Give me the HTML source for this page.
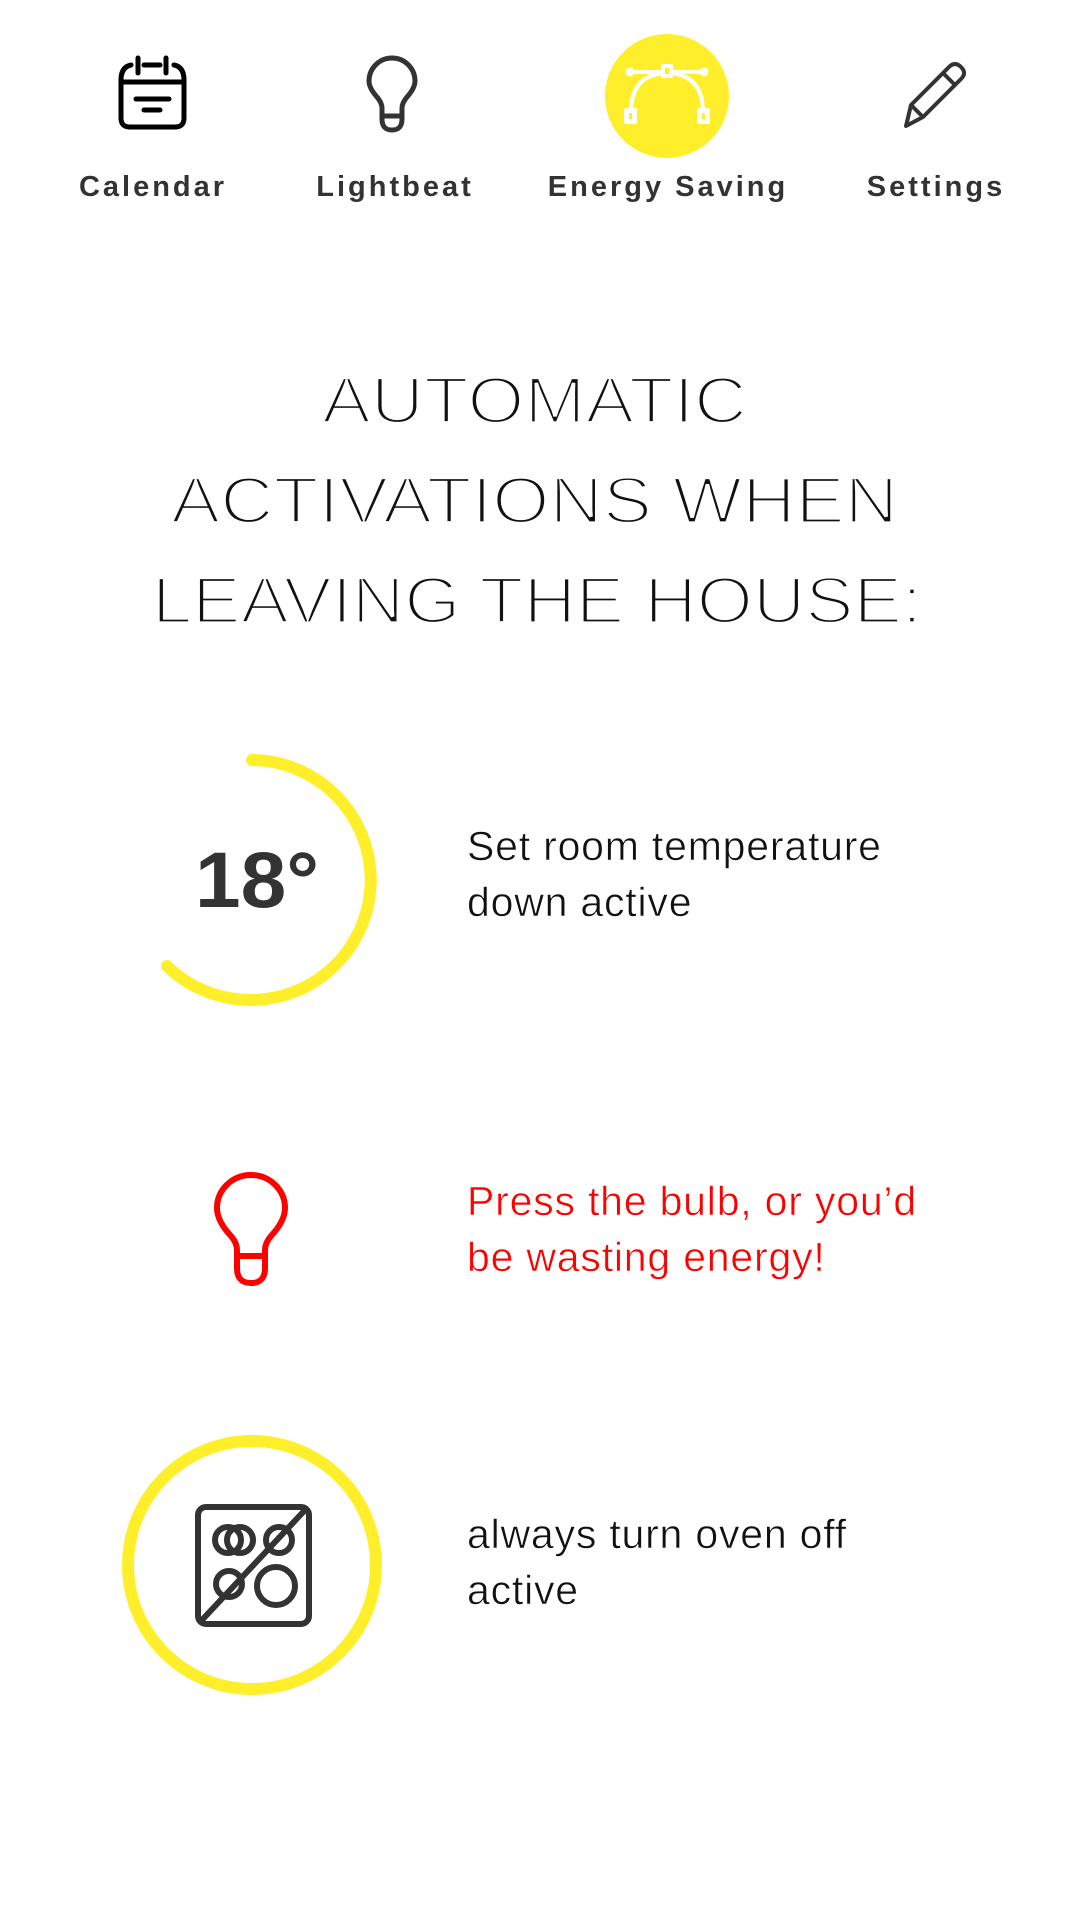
<!DOCTYPE html>
<html><head><meta charset="utf-8"><style>
html,body{margin:0;padding:0;background:#fff;width:1080px;height:1921px;overflow:hidden}
body{position:relative;font-family:"Liberation Sans",sans-serif}
.lbl{position:absolute;top:171px;font-size:29px;font-weight:bold;color:#333;letter-spacing:3px;white-space:nowrap;transform:translateX(-50%)}
.t{position:absolute;left:467px;font-size:41px;letter-spacing:0.8px;line-height:56px;color:#111;white-space:nowrap;-webkit-text-stroke:0.6px #fff}
svg{position:absolute;left:0;top:0}
</style></head><body>
<svg width="1080" height="1921" viewBox="0 0 1080 1921">
<!-- calendar -->
<g fill="none" stroke="#000" stroke-width="5" stroke-linecap="round">
<path d="M131 65 Q121 67 121 80 V118 Q121 127 130 127 H175 Q184 127 184 118 V80 Q184 67 174 65"/>
<line x1="121" y1="82" x2="184" y2="82"/>
<line x1="138" y1="58" x2="138" y2="73"/><line x1="166" y1="58" x2="166" y2="73"/>
<line x1="144" y1="65" x2="160" y2="65"/>
<line x1="136" y1="99" x2="169" y2="99"/><line x1="144" y1="110" x2="160" y2="110"/>
</g>
<!-- bulb -->
<g fill="none" stroke="#333" stroke-width="5" stroke-linejoin="round">
<path d="M382 119 V108 Q382 103 377 97 Q369 88 369 81 A23 23 0 0 1 415 81 Q415 88 407 97 Q402 103 402 108 V119 Q402 130 392 130 Q382 130 382 119 Z"/>
<line x1="382" y1="116" x2="402" y2="116"/>
</g>
<!-- energy saving -->
<circle cx="667" cy="96" r="62" fill="#ffef2a"/>
<g fill="none" stroke="#fff" stroke-width="4">
<path d="M631 112 Q631 74 667 73 Q703 74 703 112"/>
<line x1="631" y1="72" x2="703" y2="72"/>
</g>
<g fill="#fff">
<rect x="661" y="64" width="12" height="14" rx="2"/>
<circle cx="630" cy="72" r="4.5"/><circle cx="704" cy="72" r="4.5"/>
<rect x="624" y="108" width="13" height="16" rx="2"/><rect x="697" y="108" width="13" height="16" rx="2"/>
</g>
<g fill="#ffef2a"><rect x="665" y="68" width="4" height="6"/><rect x="629" y="113" width="3" height="6"/><rect x="702" y="113" width="3" height="6"/></g>
<!-- pencil -->
<g fill="none" stroke="#333" stroke-width="4" stroke-linejoin="round">
<path d="M906 126 L911 105 L949 67 Q955 61 961 67 Q967 73 961 79 L923 117 Z"/>
<line x1="911" y1="105" x2="923" y2="117"/><line x1="943" y1="73" x2="955" y2="85"/>
</g>
<!-- heading -->
<g font-family="Liberation Sans, sans-serif" font-size="66" fill="#111" stroke="#fff" stroke-width="3.2" text-anchor="start">
<text x="322" y="423" textLength="425" lengthAdjust="spacingAndGlyphs">AUTOMATIC</text>
<text x="171" y="523" textLength="727" lengthAdjust="spacingAndGlyphs">ACTIVATIONS WHEN</text>
<text x="152" y="623" textLength="770" lengthAdjust="spacingAndGlyphs">LEAVING THE HOUSE:</text>
</g>
<!-- arc -->
<path d="M252 760 A120 120 0 1 1 167 966" fill="none" stroke="#ffef2a" stroke-width="12" stroke-linecap="round"/>
<text x="195" y="907" font-family="Liberation Sans, sans-serif" font-weight="bold" font-size="79" fill="#333" textLength="124" lengthAdjust="spacingAndGlyphs">18°</text>
<!-- red bulb -->
<g fill="none" stroke="#f00" stroke-width="6" stroke-linejoin="round">
<path d="M237 1268 V1250 Q237 1243 231 1236 Q217 1221 217 1208 A34 33 0 0 1 285 1208 Q285 1221 271 1236 Q265 1243 265 1250 V1268 Q265 1283 251 1283 Q237 1283 237 1268 Z"/>
<line x1="237" y1="1256" x2="265" y2="1256"/>
</g>
<!-- oven -->
<circle cx="252" cy="1565" r="124" fill="none" stroke="#ffef2a" stroke-width="12"/>
<g fill="none" stroke="#333" stroke-width="6">
<rect x="198" y="1507" width="111" height="117" rx="8"/>
<circle cx="228" cy="1540" r="13"/><circle cx="240" cy="1540" r="13"/>
<circle cx="279" cy="1540" r="13"/>
<circle cx="229" cy="1584" r="13"/><circle cx="276" cy="1586" r="19"/>
<line x1="305" y1="1510" x2="202" y2="1620"/>
</g>
</svg>
<div class="lbl" style="left:153px">Calendar</div>
<div class="lbl" style="left:395px">Lightbeat</div>
<div class="lbl" style="left:668px">Energy Saving</div>
<div class="lbl" style="left:936px">Settings</div>
<div class="t" style="top:818px">Set room temperature<br>down active</div>
<div class="t" style="top:1173px;color:#f00">Press the bulb, or you’d<br>be wasting energy!</div>
<div class="t" style="top:1506px">always turn oven off<br>active</div>
</body></html>
